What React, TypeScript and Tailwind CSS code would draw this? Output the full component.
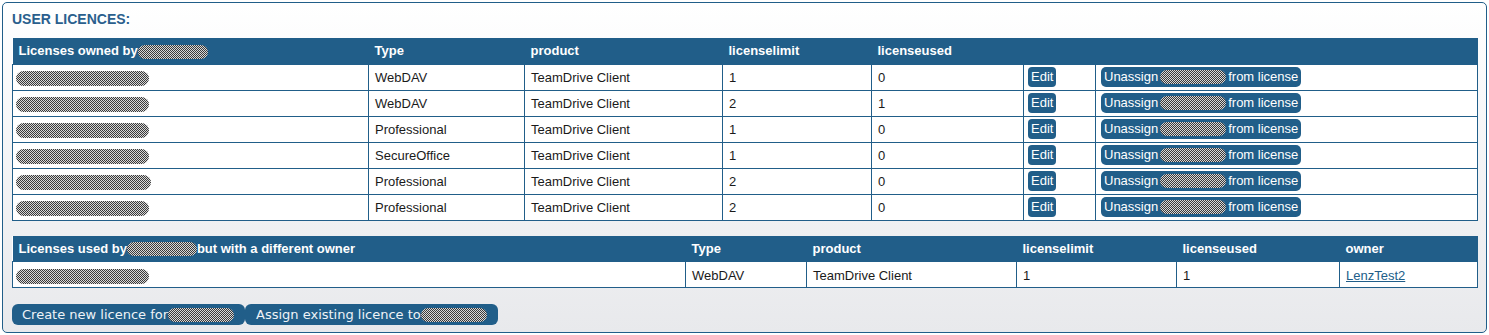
import React from "react";

const Redacted = ({ w, h = 15, className = "" }: { w: number; h?: number; className?: string }) => (
  <span
    className={`inline-block align-middle rounded-full bg-[image:repeating-conic-gradient(#3a3a3a_0%_25%,#d8d8d8_0%_50%)] bg-[length:2px_2px] ${className}`}
    style={{ width: w, height: h }}
  />
);

const ownedRows = [
  { type: "WebDAV", limit: "1", used: "0", w: 133 },
  { type: "WebDAV", limit: "2", used: "1", w: 133 },
  { type: "Professional", limit: "1", used: "0", w: 133 },
  { type: "SecureOffice", limit: "1", used: "0", w: 133 },
  { type: "Professional", limit: "2", used: "0", w: 135 },
  { type: "Professional", limit: "2", used: "0", w: 133 },
];

const th = "h-[26px] px-[6px] text-left font-bold text-white";
const td = "h-[26px] px-[6px] border border-[#215e89] text-[#1a1a1a]";

const App = () => {
  return (
    <div className="font-['Liberation_Sans',Arial,sans-serif] text-[13px] bg-white">
      <div className="m-[2px] h-[331px] rounded-[5px] border border-[#215e89] bg-gradient-to-b from-white to-[#e8e9ec] px-[9px] pt-[8px]">
        <h2 className="text-[14px] font-bold text-[#2a5f8d] leading-[17px] mb-[10px]">USER LICENCES:</h2>

        <table className="w-[1465px] table-fixed border-collapse bg-white">
          <colgroup>
            <col className="w-[356px]" />
            <col className="w-[156px]" />
            <col className="w-[198px]" />
            <col className="w-[149px]" />
            <col className="w-[152px]" />
            <col className="w-[72px]" />
            <col className="w-[382px]" />
          </colgroup>
          <thead>
            <tr className="bg-[#215e89]">
              <th className={th}>
                Licenses owned by<Redacted w={70} h={14} />
              </th>
              <th className={th}>Type</th>
              <th className={th}>product</th>
              <th className={th}>licenselimit</th>
              <th className={th}>licenseused</th>
              <th className={th}></th>
              <th className={th}></th>
            </tr>
          </thead>
          <tbody>
            {ownedRows.map((r, i) => (
              <tr key={i}>
                <td className={`${td} pl-[3px] pt-[2px]`}>
                  <Redacted w={r.w} />
                </td>
                <td className={`${td} pt-[2px]`}>{r.type}</td>
                <td className={`${td} pt-[2px]`}>TeamDrive Client</td>
                <td className={`${td} pt-[2px]`}>{r.limit}</td>
                <td className={`${td} pt-[2px]`}>{r.used}</td>
                <td className={`${td} pl-[4px]`}>
                  <button className="h-[20px] rounded-[4px] bg-[#215e89] px-[3px] text-[13px] text-white">Edit</button>
                </td>
                <td className={`${td} pl-[5px]`}>
                  <button className="flex h-[20px] items-center rounded-[5px] bg-[#215e89] px-[3px] text-[13px] text-white">
                    Unassign<Redacted w={66} h={14} className="mx-[2px]" />from license
                  </button>
                </td>
              </tr>
            ))}
          </tbody>
        </table>

        <table className="mt-[15px] w-[1465px] table-fixed border-collapse bg-white">
          <colgroup>
            <col className="w-[673px]" />
            <col className="w-[121px]" />
            <col className="w-[210px]" />
            <col className="w-[160px]" />
            <col className="w-[163px]" />
            <col className="w-[138px]" />
          </colgroup>
          <thead>
            <tr className="bg-[#215e89]">
              <th className={th}>
                Licenses used by<Redacted w={70} h={14} />but with a different owner
              </th>
              <th className={th}>Type</th>
              <th className={th}>product</th>
              <th className={th}>licenselimit</th>
              <th className={th}>licenseused</th>
              <th className={th}>owner</th>
            </tr>
          </thead>
          <tbody>
            <tr>
              <td className={`${td} pl-[3px] pt-[2px]`}>
                <Redacted w={133} />
              </td>
              <td className={`${td} pt-[2px]`}>WebDAV</td>
              <td className={`${td} pt-[2px]`}>TeamDrive Client</td>
              <td className={`${td} pt-[2px]`}>1</td>
              <td className={`${td} pt-[2px]`}>1</td>
              <td className={`${td} pt-[2px]`}>
                <a href="#" className="text-[#215e89] underline">LenzTest2</a>
              </td>
            </tr>
          </tbody>
        </table>

        <div className="mt-[16px] flex font-['DejaVu_Sans',sans-serif] text-[13px] text-[#eef3f7]">
          <button className="flex h-[21px] w-[233px] items-center rounded-[6px] bg-[#215e89] pl-[10px]">
            Create new licence for<Redacted w={66} h={14} />
          </button>
          <button className="flex h-[21px] w-[253px] items-center rounded-[6px] bg-[#215e89] pl-[11px]">
            Assign existing licence to<Redacted w={66} h={14} />
          </button>
        </div>
      </div>
    </div>
  );
};

export default App;
